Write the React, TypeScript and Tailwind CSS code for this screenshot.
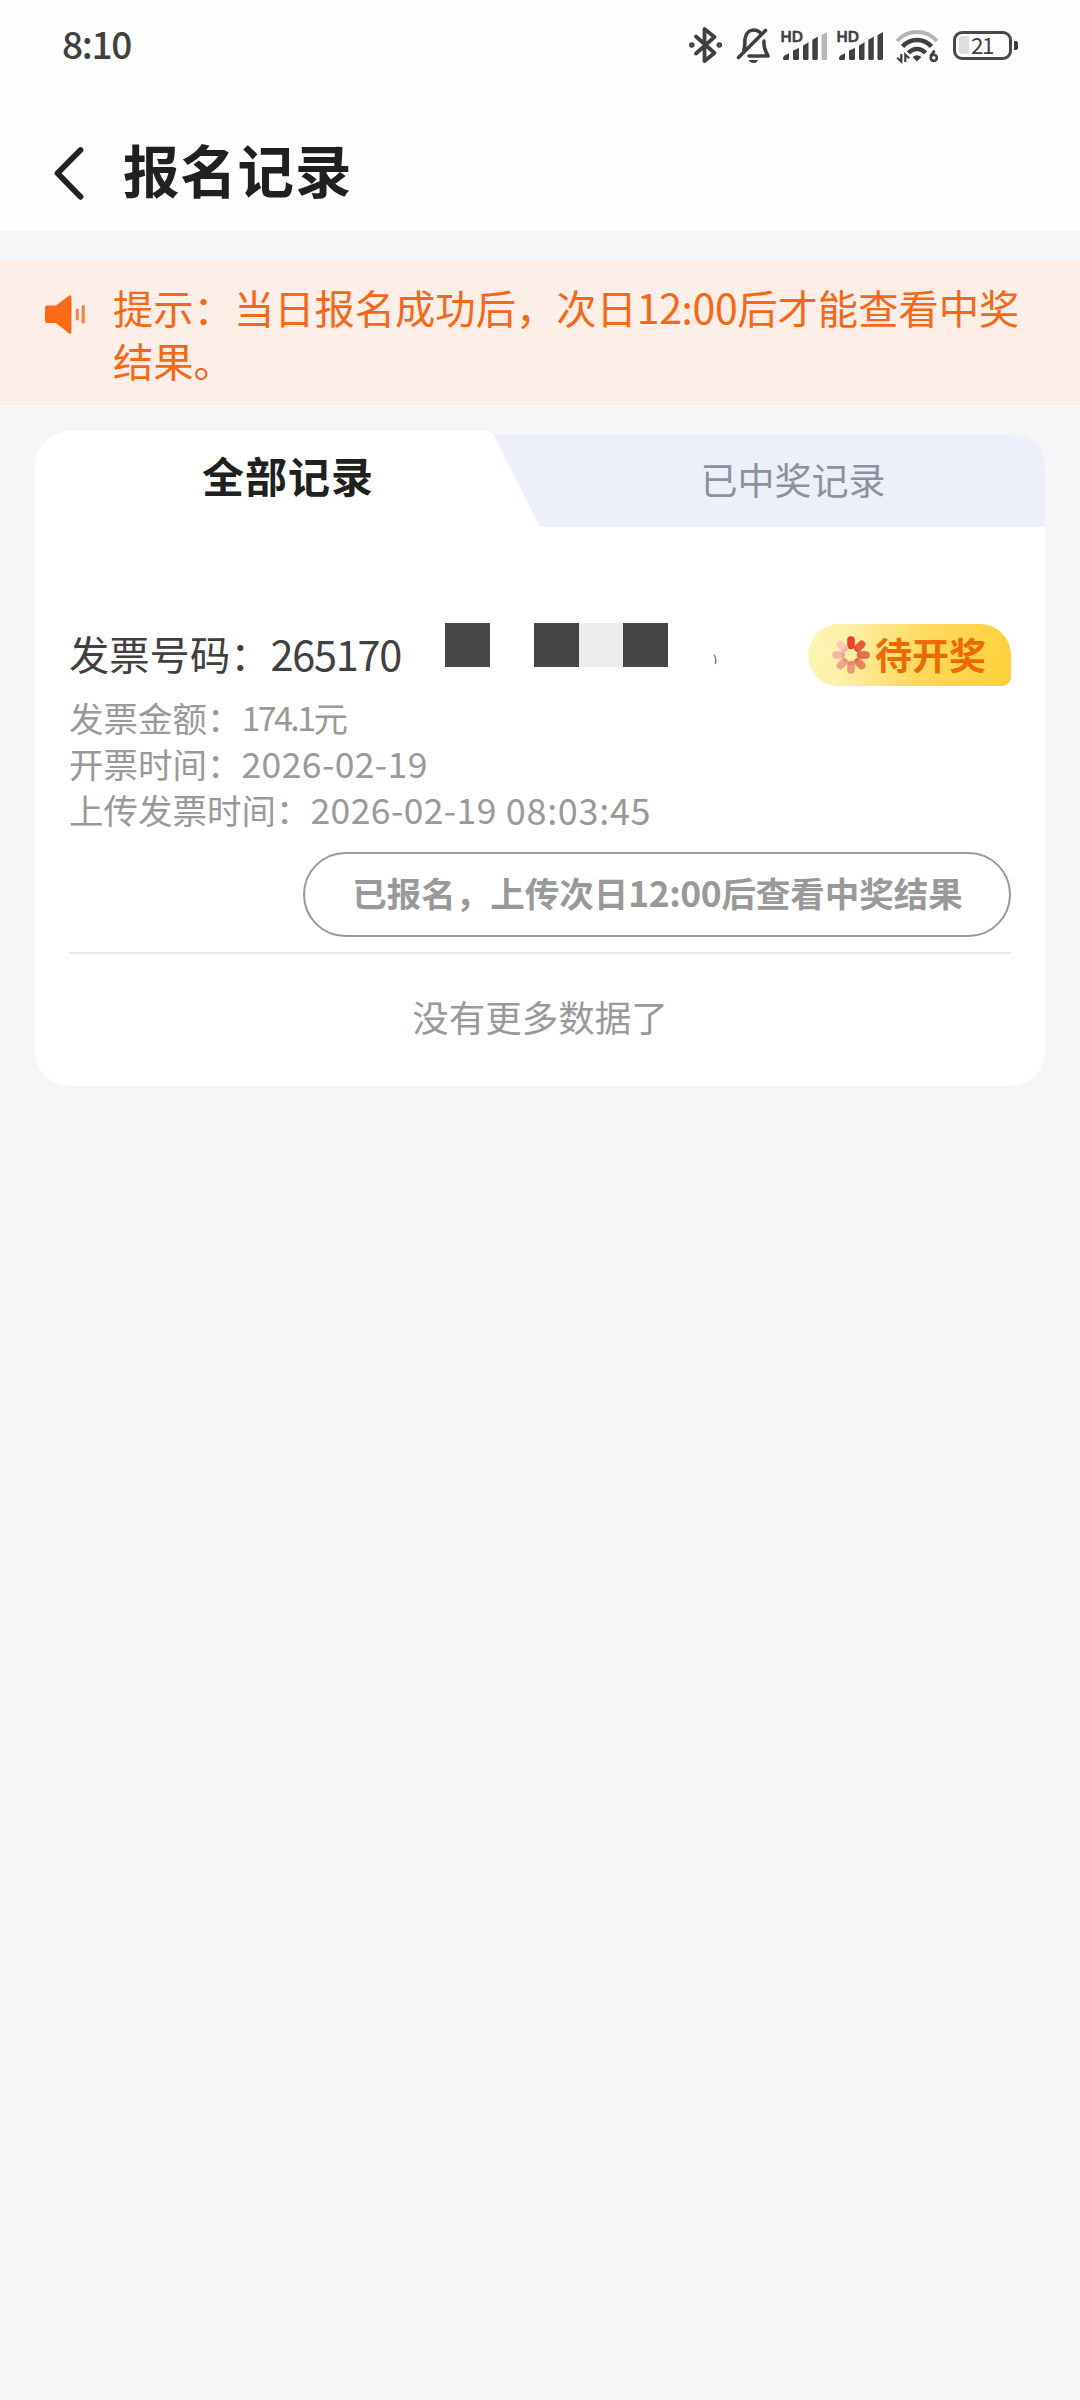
import React from "react";

function BluetoothIcon() {
  return (
    <svg width="34" height="38" viewBox="689 26 34 38" fill="none" stroke="#404040" strokeWidth="3.8" strokeLinejoin="round" strokeLinecap="round">
      <path d="M696 36.5 L714.5 53 L704.5 61 V29 L714.5 37 L696 53.5" />
      <circle cx="691.8" cy="45" r="1.2" strokeWidth="3.2" />
      <circle cx="719.3" cy="45" r="1.2" strokeWidth="3.2" />
    </svg>
  );
}

function BellOffIcon() {
  return (
    <svg width="36" height="38" viewBox="736 26 36 38" fill="none" stroke="#404040" strokeWidth="3.6" strokeLinejoin="round" strokeLinecap="round">
      <path d="M738.5 57.5 L765.5 30.5" />
      <path d="M743.8 50 C745.5 46 744.5 42 745 39 C746 32.5 750 30 753.5 30 C756.5 30 758.5 31 760 32.5" />
      <path d="M764 41 C763.6 47 765 50 768 56 H749" />
      <path d="M749.5 60.6 H757.5 Q756.5 62.6 753.5 62.6 Q750.5 62.6 749.5 60.6Z" fill="#404040" strokeWidth="1" />
    </svg>
  );
}

function SignalIcon({ last }: { last: string }) {
  return (
    <svg width="48" height="38" viewBox="780 26 48 38" fill="#404040">
      <text x="780.5" y="41.6" fontSize="15.2" fontWeight="700" fontFamily="Lato, sans-serif" textLength="22.4" lengthAdjust="spacingAndGlyphs" stroke="#404040" strokeWidth="0.5">HD</text>
      <path d="M784 60 Q782.6 60 783 58 Q783.3 55.5 789 53.2 V58.5 Q789 60 787.5 60Z" />
      <path d="M793 50.5 Q796 49.5 799 47.8 V58.5 Q799 60 797.5 60 H794.5 Q793 60 793 58.5Z" />
      <path d="M803 45.5 Q806 44 808.5 42 V58.5 Q808.5 60 807 60 H804.5 Q803 60 803 58.5Z" />
      <path d="M812.3 39.8 Q815 38.4 817.8 36.5 V58.5 Q817.8 60 816.3 60 H813.8 Q812.3 60 812.3 58.5Z" />
      <path fill={last} d="M821.5 35 Q824 33.8 827 32 V58.5 Q827 60 825.5 60 H823 Q821.5 60 821.5 58.5Z" />
    </svg>
  );
}

function WifiIcon() {
  return (
    <svg width="44" height="38" viewBox="895 26 44 38" fill="none" stroke="#404040">
      <path d="M897 41 Q905 32 917 32 Q929 32 937 41" stroke="#b5b5b5" strokeWidth="4" />
      <path d="M902.5 46.5 Q908.5 40 917 40 Q925.5 40 931.5 46.5" strokeWidth="4.6" />
      <path d="M908.5 53 Q912 49 917 49 Q922 49 925.5 53" strokeWidth="4.6" />
      <path d="M912.5 57 Q917 53.5 921.5 57 L917 61.5Z" fill="#404040" stroke="none" />
      <path d="M901.3 54 V61.5 L897.2 57.8 M905.3 62 V54.5 L909.2 58.2" strokeWidth="2.2" />
      <path d="M934.5 50.6 L930.5 56.2" strokeWidth="2.8" />
      <circle cx="933.8" cy="57.8" r="3.1" strokeWidth="2.6" />
    </svg>
  );
}

function Battery() {
  return (
    <div className="flex h-[30px] items-center gap-[2px]">
      <div className="flex h-[29px] w-[59px] items-center rounded-[9px] border-[3px] border-[#484848] pl-[3px]">
        <div className="h-[18px] w-[10px] rounded-l-[3px] bg-[#dedede]" />
        <span className="mt-[-3px] ml-[2px] text-[22.5px] leading-[24px] tracking-[-1.4px] text-[#404040]">21</span>
      </div>
      <div className="h-[9px] w-[4px] rounded-r-[2px] bg-[#404040]" />
    </div>
  );
}

function StatusBar() {
  return (
    <div className="flex h-[92px] items-start justify-between pr-[62px] pl-[62px]">
      <span className="mt-[21px] text-[37px] leading-[44px] font-medium tracking-[-1.3px] text-[#404040]">8:10</span>
      <div className="mt-[26px] flex items-center">
        <BluetoothIcon />
        <div className="ml-[13px] flex"><BellOffIcon /></div>
        <div className="ml-[8px] flex"><SignalIcon last="#b8b8b8" /></div>
        <div className="ml-[8px] flex"><SignalIcon last="#404040" /></div>
        <div className="ml-[11px] flex"><WifiIcon /></div>
        <div className="ml-[14px] flex"><Battery /></div>
      </div>
    </div>
  );
}

function SpeakerIcon() {
  return (
    <svg className="mt-[34px] h-[42px] w-[42px] shrink-0" viewBox="44 294 42 42" fill="#fb6a16">
      <path d="M45 307.5 Q45 305.5 47 305.5 H56 L69.2 295.6 Q71.4 294.4 71.4 297 V332 Q71.4 334.6 69.2 333.4 L56 323 H47 Q45 323 45 321Z" />
      <rect x="75.8" y="308.5" width="3" height="12" rx="1.4" fill="#f08550" />
      <rect x="81.6" y="305" width="3.2" height="18.5" rx="1.5" fill="#f08550" />
    </svg>
  );
}

const PETALS = ["#ea4224", "#e65a3c", "#e46e50", "#e8805e", "#ec977a", "#efa68c", "#f3b8a0", "#f8cdb8"];

function PetalsIcon() {
  return (
    <svg className="h-[38px] w-[38px] shrink-0" viewBox="-19 -19 38 38">
      {PETALS.map((c, i) => (
        <g key={c} transform={`rotate(${i * 45})`}>
          <rect x="-3.8" y="-18.8" width="7.6" height="13" rx="3.7" fill={c} />
          <path d="M-3 -9.4 Q-2.7 -6 0 -6 Q2.7 -6 3 -9.4Z" fill="#c9512f" opacity="0.2" />
        </g>
      ))}
    </svg>
  );
}

function Detail({ label, children }: { label: string; children: React.ReactNode }) {
  return (
    <div className="flex h-[46px] items-center text-[34.5px] leading-[46px] whitespace-nowrap text-[#999]">
      <span>{label}</span>
      {children}
    </div>
  );
}

export default function App() {
  return (
    <div className="h-[2400px] w-[1080px] overflow-hidden bg-[#f4f6f8] font-['Noto_Sans_CJK_SC',sans-serif]">
      <header className="h-[231px] bg-[#fefefe]">
        <StatusBar />
        <div className="flex h-[139px] items-start pl-[52px]">
          <svg className="mt-[53px] h-[56px] w-[34px]" viewBox="52 145 34 56" fill="none" stroke="#222" strokeWidth="5.8" strokeLinecap="round" strokeLinejoin="round">
            <path d="M80.5 150 L57.5 173.3 L80.5 196.8" />
          </svg>
          <h1 className="mt-[36px] ml-[37px] text-[56.5px] leading-[80px] font-bold tracking-[0.8px] text-[#202020]">报名记录</h1>
        </div>
      </header>

      <section className="mt-[29px] flex h-[145px] bg-[#feeee8] pl-[44px] text-[#f56818]">
        <SpeakerIcon />
        <p className="mt-[20px] ml-[27px] text-[40.3px] leading-[53.3px] whitespace-nowrap">
          提示：当日报名成功后，次日<span className="text-[41px] tracking-[-0.4px]">12:00</span>后才能查看中奖
          <br />
          结果。
        </p>
      </section>

      <main className="mx-[35px] mt-[26px] h-[655px] rounded-[35px] bg-white">
        <div className="relative flex h-[96px]">
          <svg className="absolute top-0 right-0 h-[96px] w-[556px]" viewBox="489 431 556 96">
            <rect x="489" y="430" width="556" height="97" fill="#f4f6f8" />
            <path d="M492 435 H1010 Q1045 435 1045 470 V527 H540Z" fill="#edf0fa" />
            <path d="M489 431 H490 L493 434 L540 527 H489Z" fill="#fff" />
          </svg>
          <button className="relative h-[87px] w-[505px] pl-[1px] text-[42px] leading-[87px] font-bold tracking-[1px] text-[#202020]">全部记录</button>
          <button className="relative h-[96px] w-[505px] pl-[1px] text-[37px] leading-[96px] text-[#8b929d]">已中奖记录</button>
        </div>

        <div className="pr-[34px] pl-[34px]">
          <div className="mt-[97px] flex h-[62px]">
            <div className="mt-[-5px] flex w-[376px] items-center whitespace-nowrap text-[#404040]">
              <span className="text-[40.3px] leading-[56px]">发票号码：</span>
              <span className="text-[41.5px] leading-[56px] tracking-[-1.3px]">265170</span>
            </div>
            <div className="mt-[-1.5px] flex">
              <div className="mr-[44.5px] h-[44.5px] w-[44.5px] bg-[#474747]" />
              <div className="h-[44.5px] w-[44.5px] bg-[#444]" />
              <div className="h-[44.5px] w-[44.5px] bg-[#ededed]" />
              <div className="h-[44.5px] w-[44.5px] bg-[#444]" />
            </div>
            <svg className="mt-[30px] ml-[45px] h-[12px] w-[5px]" viewBox="0 0 5 12" fill="none" stroke="#777" strokeWidth="1.3">
              <path d="M1 0.5 Q3.6 5 2.4 10" />
            </svg>
            <div className="ml-auto flex w-[203px] items-center rounded-[31px] rounded-br-[9px] bg-[linear-gradient(105deg,#fff5b8_0%,#fdf0a8_20%,#ffd95e_55%,#ffd03a_100%)] pl-[24px]">
              <PetalsIcon />
              <span className="mt-[-2px] ml-[5px] text-[37px] leading-[56px] font-bold whitespace-nowrap text-[#ee6a00]">待开奖</span>
            </div>
          </div>

          <div className="mt-[7.5px]">
            <Detail label="发票金额：">
              <span className="text-[34px] tracking-[-2.6px]">174.1</span>
              <span>元</span>
            </Detail>
            <Detail label="开票时间：">
              <span className="text-[35.5px] tracking-[0.4px]">2026-02-19</span>
            </Detail>
            <Detail label="上传发票时间：">
              <span className="text-[35.5px] tracking-[0.4px]">2026-02-19</span>
              <span className="ml-[9px] text-[36px] tracking-[0.7px]">08:03:45</span>
            </Detail>
          </div>

          <div className="mt-[20px] flex justify-end">
            <button className="h-[85px] w-[708px] rounded-full border-2 border-[#999] pl-[1px] text-[34.5px] leading-[76px] font-bold whitespace-nowrap text-[#999]">
              <span className="relative top-[-2px]">
                已报名，上传次日<span className="text-[35.5px] tracking-[-0.5px]">12:00</span>后查看中奖结果
              </span>
            </button>
          </div>
          <div className="mt-[15px] h-[2px] bg-[#e8e8e8]" />
          <p className="mt-[35px] text-center text-[36.5px] leading-[56px] text-[#999]">没有更多数据了</p>
        </div>
      </main>
    </div>
  );
}
